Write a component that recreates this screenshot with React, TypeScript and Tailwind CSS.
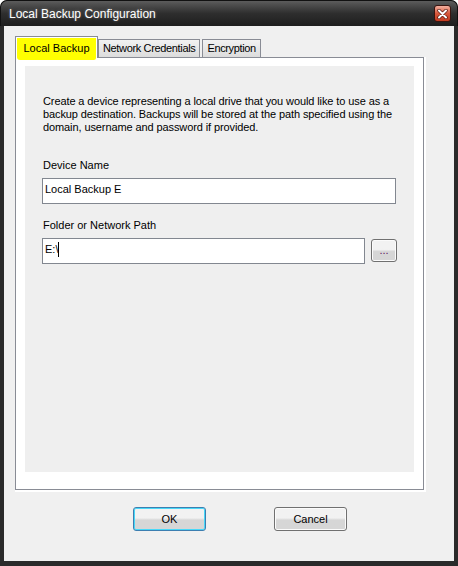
import React from 'react';

const font = { fontFamily: '"Liberation Sans", Arial, sans-serif' };

function CloseButton() {
  return (
    <div className="w-[17px] h-[17px] rounded-[3px] border border-[#3a1510] bg-gradient-to-b from-[#f2b0a0] via-[#d8583c] to-[#c23b20] flex items-center justify-center">
      <svg width="11" height="10" viewBox="0 0 11 10">
        <path d="M2 1.5 L9 8.5 M9 1.5 L2 8.5" stroke="#5a1a10" strokeWidth="3.4" strokeLinecap="round" />
        <path d="M2 1.5 L9 8.5 M9 1.5 L2 8.5" stroke="#ffffff" strokeWidth="2" strokeLinecap="round" />
      </svg>
    </div>
  );
}

function Tab({ label, active }: { label: string; active?: boolean }) {
  if (active) {
    return (
      <div className="relative z-10 -mb-px h-[22px] w-[83px] bg-white border border-b-0 border-[#898c95] px-px pt-px">
        <div className="h-[22px] bg-[#ffff00] rounded-bl-[3px] rounded-br-[2px] flex items-start justify-center pt-[2px] text-[11px] text-black">
          {label}
        </div>
      </div>
    );
  }
  return (
    <div className="h-[18px] px-[4px] border border-b-0 border-[#898c95] bg-gradient-to-b from-[#f2f2f2] to-[#dcdcdc] flex items-center text-[11px] tracking-[-0.35px] text-black">
      {label}
    </div>
  );
}

function WinButton({ label, focused }: { label: string; focused?: boolean }) {
  return (
    <div
      className={
        'w-[73px] h-[24px] rounded-[3px] border flex items-center justify-center text-[11px] text-black bg-gradient-to-b from-[#f2f2f2] from-45% to-[#d6d6d6] to-55% ' +
        (focused ? 'border-[#3c7fb1] shadow-[inset_0_0_0_1px_#48d8f8]' : 'border-[#707070] shadow-[inset_0_0_0_1px_#fbfbfb]')
      }
    >
      {label}
    </div>
  );
}

export default function App() {
  return (
    <div className="w-[458px] h-[566px] flex flex-col bg-[#2a2a2a] rounded-t-[7px] overflow-hidden" style={font}>
      {/* title bar */}
      <div className="h-[26px] shrink-0 flex items-center justify-between pl-[8px] pr-[6px] bg-gradient-to-b from-[#5c5c5c] via-[#2e2e2e] to-[#1e1e1e] border-t border-x border-[#111] rounded-t-[7px]">
        <span className="text-[12px] text-white [text-shadow:0_0_3px_rgba(255,255,255,0.35)]">Local Backup Configuration</span>
        <CloseButton />
      </div>

      {/* client */}
      <div className="flex-1 mx-[4px] mb-[5px] bg-[#f0f0f0] flex flex-col pl-[11px] pt-[10px]">
        <div className="flex items-end">
          <Tab label="Local Backup" active />
          <Tab label="Network Credentials" />
          <div className="w-[2px]" />
          <Tab label="Encryption" />
        </div>

        <div className="w-[411px] bg-white pr-[2px] pb-[2px]">
          <div className="w-[409px] h-[433px] border border-[#898c95] bg-white pl-[9px] pt-[8px]">
            <div className="w-[389px] h-[406px] bg-[#efefef] pt-[29px] pl-[17px] text-[11px] leading-[13px] text-black">
              <p className="pl-px tracking-[-0.1px]">
                Create a device representing a local drive that you would like to use as a backup destination. Backups will be stored at the path specified using the domain, username and password if provided.
              </p>

              <div className="mt-[25px] pl-px">Device Name</div>
              <div className="mt-[6px] w-[354px] h-[26px] border border-[#828790] bg-white pl-[2px] pt-[4px]">Local Backup E</div>

              <div className="mt-[15px] pl-px">Folder or Network Path</div>
              <div className="mt-[6px] flex items-start gap-[6px]">
                <div className="w-[323px] h-[26px] border border-[#828790] bg-white pl-[2px] pt-[4px] flex items-start">
                  <span>E:\</span>
                  <span className="w-px h-[15px] bg-black -mt-[1px]" />
                </div>
                <div className="mt-px w-[26px] h-[23px] rounded-[3px] border border-[#707070] shadow-[inset_0_0_0_1px_#fbfbfb] bg-gradient-to-b from-[#f2f2f2] from-45% to-[#d6d6d6] to-55% flex items-center justify-center text-[11px] text-[#602060]">
                  ...
                </div>
              </div>
            </div>
          </div>
        </div>

        <div className="mt-[15px] flex pl-[118px] gap-[68px]">
          <WinButton label="OK" focused />
          <WinButton label="Cancel" />
        </div>
      </div>
    </div>
  );
}
